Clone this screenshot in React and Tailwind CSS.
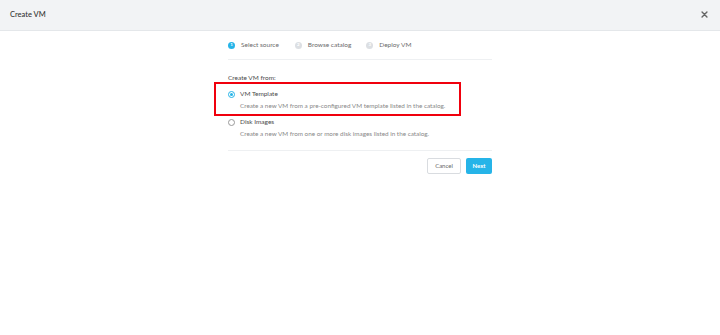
export default function App() {
  const font = { fontFamily: "Lato, 'Open Sans', sans-serif" };
  return (
    <div className="w-[720px] h-[335px] bg-white overflow-hidden" style={font}>
      <div className="h-[31px] bg-[#f2f3f5] border-b border-[#e4e7ea] flex items-center justify-between pl-[10px] pr-[12px]">
        <span className="text-[7.5px] font-medium text-[#333] leading-none">Create VM</span>
        <svg width="7" height="7" viewBox="0 0 10 10" className="mb-[2px]">
          <path d="M1.5 1.5 L8.5 8.5 M8.5 1.5 L1.5 8.5" stroke="#666" strokeWidth="2" strokeLinecap="round" />
        </svg>
      </div>
      <div className="w-[264px] mx-auto">
        <div className="h-[29px] flex items-center border-b border-[#eef0f2] text-[6.5px] text-[#6b6b6b] leading-none">
          <div className="flex items-center">
            <span className="w-[7px] h-[7px] rounded-full bg-[#26b4e8] text-white text-[4.5px] font-bold flex items-center justify-center">1</span>
            <span className="ml-[6px]">Select source</span>
          </div>
          <div className="flex items-center ml-[16px]">
            <span className="w-[7px] h-[7px] rounded-full bg-[#dcdfe3] text-white text-[4.5px] font-bold flex items-center justify-center">2</span>
            <span className="ml-[6px]">Browse catalog</span>
          </div>
          <div className="flex items-center ml-[15px]">
            <span className="w-[7px] h-[7px] rounded-full bg-[#dcdfe3] text-white text-[4.5px] font-bold flex items-center justify-center">3</span>
            <span className="ml-[6px]">Deploy VM</span>
          </div>
        </div>
        <div className="border-b border-[#eef0f2] pb-[12px]">
          <div className="mt-[14px] h-[8px] flex items-center text-[6.5px] text-[#4a4a4a] leading-none">Create VM from:</div>
          <div className="relative mt-[8px]">
            <div className="absolute left-[-14px] top-[-8px] w-[247px] h-[34px] border-2 border-[#f0000d]" />
            <div className="h-[8px] flex items-center">
              <span className="w-[7px] h-[7px] rounded-full border-[1.5px] border-[#26b4e8] flex items-center justify-center">
                <span className="w-[3px] h-[3px] rounded-full bg-[#26b4e8]" />
              </span>
              <span className="ml-[5px] text-[6.5px] text-[#4a4a4a] leading-none">VM Template</span>
            </div>
            <div className="mt-[4px] ml-[12px] h-[8px] flex items-center text-[6.35px] text-[#888] leading-none whitespace-nowrap">
              Create a new VM from a pre-configured VM template listed in the catalog.
            </div>
          </div>
          <div className="mt-[8px]">
            <div className="h-[8px] flex items-center">
              <span className="w-[7px] h-[7px] rounded-full border border-[#999]" />
              <span className="ml-[5px] text-[6.5px] text-[#4a4a4a] leading-none">Disk Images</span>
            </div>
            <div className="mt-[4px] ml-[12px] h-[8px] flex items-center text-[6.35px] text-[#888] leading-none whitespace-nowrap">
              Create a new VM from one or more disk images listed in the catalog.
            </div>
          </div>
        </div>
        <div className="mt-[7px] flex justify-end gap-[5px]">
          <button className="w-[34px] h-[16px] border border-[#d9dce0] rounded-[2px] bg-white text-[6px] text-[#666] leading-none">Cancel</button>
          <button className="w-[26px] h-[16px] rounded-[2px] bg-[#26b4e8] text-[6px] text-white font-bold leading-none">Next</button>
        </div>
      </div>
    </div>
  );
}
